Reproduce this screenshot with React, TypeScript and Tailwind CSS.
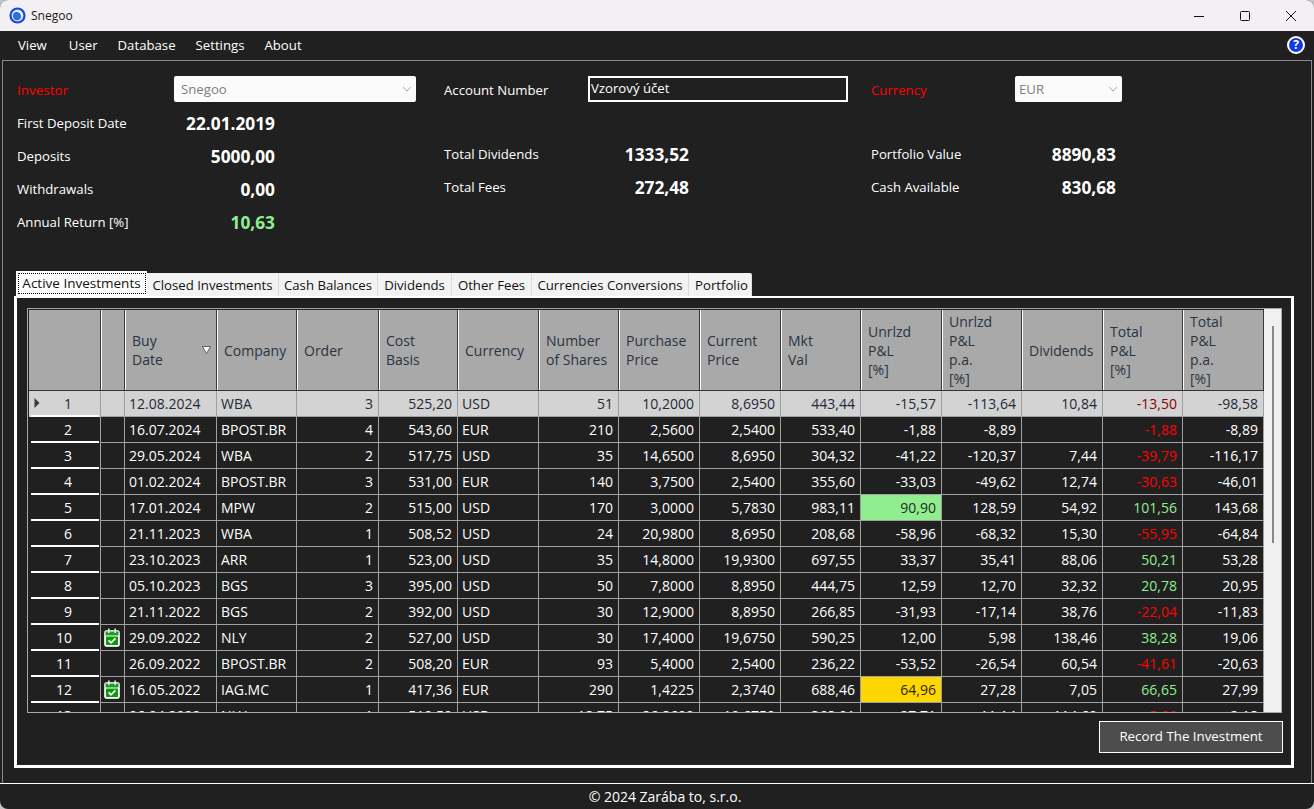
import React from "react";

const COLS = "grid grid-cols-[72px_24px_92px_80px_82px_79px_81px_80px_81px_81px_80px_81px_80px_81px_80px_81px]";

type Row = string[];
const rows: Row[] = [
  ["1", "", "12.08.2024", "WBA", "3", "525,20", "USD", "51", "10,2000", "8,6950", "443,44", "-15,57", "-113,64", "10,84", "-13,50", "-98,58"],
  ["2", "", "16.07.2024", "BPOST.BR", "4", "543,60", "EUR", "210", "2,5600", "2,5400", "533,40", "-1,88", "-8,89", "", "-1,88", "-8,89"],
  ["3", "", "29.05.2024", "WBA", "2", "517,75", "USD", "35", "14,6500", "8,6950", "304,32", "-41,22", "-120,37", "7,44", "-39,79", "-116,17"],
  ["4", "", "01.02.2024", "BPOST.BR", "3", "531,00", "EUR", "140", "3,7500", "2,5400", "355,60", "-33,03", "-49,62", "12,74", "-30,63", "-46,01"],
  ["5", "", "17.01.2024", "MPW", "2", "515,00", "USD", "170", "3,0000", "5,7830", "983,11", "90,90", "128,59", "54,92", "101,56", "143,68"],
  ["6", "", "21.11.2023", "WBA", "1", "508,52", "USD", "24", "20,9800", "8,6950", "208,68", "-58,96", "-68,32", "15,30", "-55,95", "-64,84"],
  ["7", "", "23.10.2023", "ARR", "1", "523,00", "USD", "35", "14,8000", "19,9300", "697,55", "33,37", "35,41", "88,06", "50,21", "53,28"],
  ["8", "", "05.10.2023", "BGS", "3", "395,00", "USD", "50", "7,8000", "8,8950", "444,75", "12,59", "12,70", "32,32", "20,78", "20,95"],
  ["9", "", "21.11.2022", "BGS", "2", "392,00", "USD", "30", "12,9000", "8,8950", "266,85", "-31,93", "-17,14", "38,76", "-22,04", "-11,83"],
  ["10", "cal", "29.09.2022", "NLY", "2", "527,00", "USD", "30", "17,4000", "19,6750", "590,25", "12,00", "5,98", "138,46", "38,28", "19,06"],
  ["11", "", "26.09.2022", "BPOST.BR", "2", "508,20", "EUR", "93", "5,4000", "2,5400", "236,22", "-53,52", "-26,54", "60,54", "-41,61", "-20,63"],
  ["12", "cal", "16.05.2022", "IAG.MC", "1", "417,36", "EUR", "290", "1,4225", "2,3740", "688,46", "64,96", "27,28", "7,05", "66,65", "27,99"],
  ["13", "", "06.04.2022", "NLY", "1", "519,50", "USD", "18,75", "26,8600", "19,6750", "368,91", "-27,71", "-11,14", "114,60", "-5,99", "-2,18"],
];

const headers: string[][] = [
  [""], [""], ["Buy", "Date"], ["Company"], ["Order"], ["Cost", "Basis"], ["Currency"], ["Number", "of Shares"],
  ["Purchase", "Price"], ["Current", "Price"], ["Mkt", "Val"], ["Unrlzd", "P&L", "[%]"], ["Unrlzd", "P&L", "p.a.", "[%]"],
  ["Dividends"], ["Total", "P&L", "[%]"], ["Total", "P&L", "p.a.", "[%]"],
];

const tabs = [
  ["Closed Investments", "w-[132px]"],
  ["Cash Balances", "w-[99px]"],
  ["Dividends", "w-[74px]"],
  ["Other Fees", "w-[80px]"],
  ["Currencies Conversions", "w-[157px]"],
  ["Portfolio", "w-[63px] pl-[3px]"],
];

function alignCls(i: number) {
  if (i === 2 || i === 3 || i === 6) return "justify-start pl-[4px]";
  return "justify-end pr-[5px]";
}

function Calendar() {
  return (
    <svg width="16" height="19" viewBox="0 0 16 19" className="block">
      <rect x="0.5" y="2.5" width="15" height="16" rx="2" fill="#ffffff" stroke="#d8d8d8" />
      <rect x="1.5" y="3.5" width="13" height="4" fill="#1f9e1f" />
      <rect x="2" y="8.5" width="12" height="8.5" rx="0.5" fill="#0b9a0b" />
      <rect x="4" y="0.5" width="1.6" height="4.5" fill="#e8e8e8" />
      <rect x="10.4" y="0.5" width="1.6" height="4.5" fill="#e8e8e8" />
      <path d="M4.6 12.4 L7 14.8 L11.4 10.4" fill="none" stroke="#ffffff" strokeWidth="1.8" />
    </svg>
  );
}

function Chevron() {
  return (
    <svg width="10" height="6" viewBox="0 0 10 6" className="block">
      <path d="M1 1 L5 5 L9 1" fill="none" stroke="#a8a8a8" strokeWidth="1" />
    </svg>
  );
}

function Combo({ text, cls, pad }: { text: string; cls: string; pad: string }) {
  return (
    <div className={`h-[26px] mt-[2px] bg-[#fbfbfb] rounded-[2px] flex items-center justify-between text-[#7f7f7f] ${cls} ${pad}`}>
      <span className="pt-[1px]">{text}</span>
      <Chevron />
    </div>
  );
}

function Stat({ label, value, cls, valueCls = "text-white" }: { label: string; value: string; cls: string; valueCls?: string }) {
  return (
    <div className={`h-[33px] flex items-center justify-between pt-[1px] ${cls}`}>
      <span className="text-white text-[13.2px]">{label}</span>
      <span className={`font-bold text-[17.3px] ${valueCls}`}>{value}</span>
    </div>
  );
}

function cellColor(i: number, v: string, selected: boolean) {
  if (i === 14) {
    if (v.startsWith("-")) return selected ? "text-[#8b0000]" : "text-[#ff0000]";
    return "text-[#90ee90]";
  }
  return selected ? "text-[#1f2a36]" : "text-white";
}

export default function App() {
  return (
    <div className="w-[1314px] h-[809px] bg-[#c4c4c6] overflow-hidden [font-family:'Open_Sans',sans-serif] text-[13.2px]">
      <div className="w-full h-full flex flex-col rounded-t-lg rounded-b-lg overflow-hidden bg-[#202020]">
        {/* Title bar */}
        <div className="h-[31px] shrink-0 bg-[#f3f0f3] flex items-center">
          <svg width="17" height="17" viewBox="0 0 17 17" className="ml-[9px]">
            <circle cx="8.5" cy="8.5" r="7" fill="#dbe8f7" stroke="#1747e8" strokeWidth="2.2" />
            <circle cx="8" cy="9" r="4.2" fill="#2f6fd8" />
            <path d="M7.5 4.5 A4.5 4.5 0 0 1 12.6 9.5" fill="none" stroke="#ffffff" strokeWidth="1.2" />
          </svg>
          <span className="ml-[5px] text-[12px] text-[#1a1a1a]">Snegoo</span>
          <div className="ml-auto flex items-center">
            <svg width="12" height="12" viewBox="0 0 12 12" className="mr-[34px]"><path d="M1 6.5 H11" stroke="#111" strokeWidth="1" /></svg>
            <svg width="12" height="12" viewBox="0 0 12 12" className="mr-[34px]"><rect x="1.5" y="1.5" width="9" height="9" rx="1" fill="none" stroke="#111" strokeWidth="1" /></svg>
            <svg width="12" height="12" viewBox="0 0 12 12" className="mr-[17px]"><path d="M1 1 L11 11 M11 1 L1 11" stroke="#111" strokeWidth="1" /></svg>
          </div>
        </div>

        {/* Menu */}
        <div className="h-[29px] shrink-0 flex items-center pl-[18px] pr-[9px] gap-[20px] text-white text-[13.2px]">
          <span className="mr-[2px]">View</span>
          <span>User</span>
          <span>Database</span>
          <span>Settings</span>
          <span>About</span>
          <div className="ml-auto -mt-[1px] w-[18px] h-[18px] rounded-full bg-[#1238e0] border-2 border-white flex items-center justify-center text-white font-bold text-[12px] leading-none">?</div>
        </div>

        {/* Main */}
        <div className="flex-1 min-h-0 border-t border-x border-[#8a8a8a] mx-[2px] flex flex-col">
          <div className="h-[210px] shrink-0 pt-[13px] flex">
            <div className="ml-[14px] w-[399px] flex flex-col">
              <div className="h-[33px] flex justify-between">
                <span className="text-[#ff0000] self-center text-[13.5px]">Investor</span>
                <Combo text="Snegoo" cls="w-[242px] self-start" pad="pl-[7px] pr-[4px]" />
              </div>
              <Stat label="First Deposit Date" value="22.01.2019" cls="w-[258px]" />
              <Stat label="Deposits" value="5000,00" cls="w-[258px]" />
              <Stat label="Withdrawals" value="0,00" cls="w-[258px]" />
              <Stat label="Annual Return [%]" value="10,63" cls="w-[258px]" valueCls="text-[#90ee90]" />
            </div>
            <div className="ml-[28px] w-[404px] flex flex-col">
              <div className="h-[33px] flex justify-between">
                <span className="text-white self-center">Account Number</span>
                <div className="w-[260px] h-[26px] mt-[2px] border-2 border-white flex items-center pl-[1px] pb-[1px] text-white">Vzorový účet</div>
              </div>
              <div className="h-[31px]" />
              <Stat label="Total Dividends" value="1333,52" cls="w-[245px]" />
              <Stat label="Total Fees" value="272,48" cls="w-[245px]" />
            </div>
            <div className="ml-[23px] w-[251px] flex flex-col">
              <div className="h-[33px] flex justify-between">
                <span className="text-[#ff0000] self-center">Currency</span>
                <Combo text="EUR" cls="w-[107px] self-start" pad="pl-[4px] pr-[4px]" />
              </div>
              <div className="h-[31px]" />
              <Stat label="Portfolio Value" value="8890,83" cls="w-[245px]" />
              <Stat label="Cash Available" value="830,68" cls="w-[245px]" />
            </div>
          </div>

          {/* Tabs */}
          <div className="h-[25px] shrink-0 flex items-end pl-[13px] text-[13.2px] text-[#111]">
            <div className="w-[131px] h-[25px] bg-white flex items-center justify-center">
              <div className="w-[128px] h-[21px] border border-dotted border-black flex items-center justify-center text-[13.5px]">Active Investments</div>
            </div>
            {tabs.map(([t, w]) => (
              <div key={t} className={`${w} h-[23px] pt-[2px] bg-[#f3f3f3] border-r border-[#dcdcdc] flex items-center justify-center whitespace-nowrap last:rounded-tr-[2px]`}>{t}</div>
            ))}
          </div>

          {/* Panel */}
          <div className="ml-[11px] w-[1280px] h-[472px] shrink-0 border-[3px] border-t-2 border-white flex flex-col">
            <div className="ml-[10px] mt-[10px] w-[1255px] h-[405px] shrink-0 border border-[#a8a8a8] flex overflow-hidden">
              <div className="pl-[1px] pt-[1px] w-[1236px] shrink-0 overflow-hidden text-[14px]">
                <div className={`${COLS} h-[81px] border-b border-[#333]`}>
                  {headers.map((h, i) => (
                    <div key={i} className={`relative bg-[#a9a9a9] border-r border-[#3a3a3a] ${i > 0 ? "border-l border-l-white" : ""} pl-[6px] flex flex-col justify-center text-[#2a3440] leading-[19px] whitespace-nowrap`}>
                      {h.map((l) => (
                        <span key={l}>{l}</span>
                      ))}
                      {i === 2 && (
                        <svg width="9" height="8" viewBox="0 0 9 8" className="absolute right-[5px] top-[36px]">
                          <path d="M0.5 0.5 H8.5 L4.5 7.5 Z" fill="#ffffff" stroke="#444" strokeWidth="0.8" />
                        </svg>
                      )}
                    </div>
                  ))}
                </div>
                {rows.map((r, ri) => {
                  const selected = ri === 0;
                  return (
                    <div key={ri} className={`${COLS} h-[26px] ${selected ? "bg-[#d3d3d3]" : "bg-[#202020]"}`}>
                      {r.map((v, i) => {
                        if (i === 0) {
                          return (
                            <div key={i} className="relative border-r border-[#a0a0a0] pl-[2px] pr-[1px] flex">
                              <div className={`flex-1 border-b-2 border-white flex items-center justify-end pr-[27px] ${selected ? "text-[#1f2a36]" : "text-white"}`}>{v}</div>
                              {selected && (
                                <svg width="6" height="10" viewBox="0 0 6 10" className="absolute left-[5px] top-[7px]">
                                  <path d="M0.5 0 L5.5 5 L0.5 10 Z" fill="#3a3a3a" />
                                </svg>
                              )}
                            </div>
                          );
                        }
                        if (i === 1) {
                          return (
                            <div key={i} className="border-r border-b border-[#a0a0a0] flex items-center justify-center pr-[2px]">
                              {v === "cal" && <Calendar />}
                            </div>
                          );
                        }
                        const highlight = ri === 4 && i === 11 ? "bg-[#90ee90] text-[#1f2a1f]" : ri === 11 && i === 11 ? "bg-[#ffd700] text-[#2a2400]" : cellColor(i, v, selected);
                        return (
                          <div key={i} className={`border-r border-b border-[#a0a0a0] flex items-center whitespace-nowrap pb-[1px] ${alignCls(i)} ${highlight}`}>
                            {v}
                          </div>
                        );
                      })}
                    </div>
                  );
                })}
              </div>
              <div className="w-[17px] shrink-0 bg-[#f0f0f0] pt-[17px] pl-[8px]">
                <div className="w-[2px] h-[217px] bg-[#888888]" />
              </div>
            </div>
            <button className="mt-[8px] ml-auto mr-[8px] w-[184px] h-[32px] shrink-0 bg-[#4d4d4d] border border-white text-white text-[13.3px]">Record The Investment</button>
          </div>
        </div>

        {/* Footer */}
        <div className="h-[26px] shrink-0 border-t border-white flex items-center justify-center pl-[16px] text-white text-[14px]">© 2024 Zarába to, s.r.o.</div>
      </div>
    </div>
  );
}
